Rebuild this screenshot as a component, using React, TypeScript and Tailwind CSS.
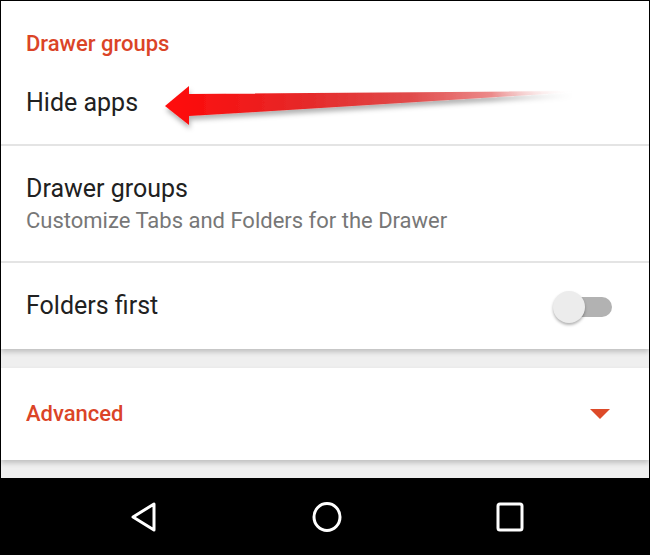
import React from "react";

const font = { fontFamily: "Roboto, 'Noto Sans', sans-serif" };

function Toggle() {
  return (
    <div className="relative w-[62px] h-[34px]">
      <div className="absolute left-[14px] top-[7px] w-[45px] h-[20px] rounded-full bg-[#b2b2b2]" />
      <div className="absolute left-0 top-[1px] w-[32px] h-[32px] rounded-full bg-[#ececec] shadow-[0_2px_3px_rgba(0,0,0,0.3)]" />
    </div>
  );
}

function Arrow() {
  return (
    <svg
      className="absolute left-[160px] top-[80px] z-20"
      width="420"
      height="56"
      viewBox="0 0 420 56"
    >
      <defs>
        <linearGradient id="ag" x1="0" y1="0" x2="1" y2="0">
          <stop offset="0" stopColor="#ff0808" />
          <stop offset="0.35" stopColor="#e52a2a" />
          <stop offset="0.6" stopColor="#e04a4a" />
          <stop offset="0.8" stopColor="#ec8a8a" />
          <stop offset="1" stopColor="#ffffff" stopOpacity="0" />
        </linearGradient>
        <filter id="sh" x="-5%" y="-40%" width="110%" height="200%">
          <feDropShadow dx="1" dy="4" stdDeviation="2.5" floodColor="#000" floodOpacity="0.3" />
        </filter>
      </defs>
      <polygon
        points="4,25 28,5 28,13 412,10 412,11.5 28,35 28,44"
        fill="url(#ag)"
        filter="url(#sh)"
        strokeLinejoin="round"
      />
    </svg>
  );
}

export default function App() {
  return (
    <div
      className="relative w-[650px] h-[555px] bg-[#efefef] border-t border-x border-black flex flex-col overflow-hidden"
      style={font}
    >
      <div className="bg-white shadow-[0_3px_5px_rgba(0,0,0,0.2)] relative z-10">
        <div className="pt-[29px] pb-[26px] px-[25px]">
          <div className="text-[22px] leading-[28px] font-medium text-[#db4427]">Drawer groups</div>
          <div className="mt-[30px] text-[25px] leading-[30px] text-[#212121]">Hide apps</div>
        </div>
        <div className="h-[2px] bg-[#e4e4e4]" />
        <div className="pt-[28px] pb-[27px] px-[25px]">
          <div className="text-[25px] leading-[30px] text-[#212121]">Drawer groups</div>
          <div className="mt-[4px] text-[22px] leading-[26px] text-[#777777]">
            Customize Tabs and Folders for the Drawer
          </div>
        </div>
        <div className="h-[2px] bg-[#e4e4e4]" />
        <div className="h-[86px] px-[25px] flex items-center justify-between">
          <div className="text-[25px] leading-[30px] text-[#212121]">Folders first</div>
          <div className="mr-[9px] mt-[2px]">
            <Toggle />
          </div>
        </div>
      </div>
      <div className="mt-[19px] h-[92px] bg-white shadow-[0_3px_5px_rgba(0,0,0,0.2)] px-[25px] flex items-center justify-between">
        <div className="text-[22px] leading-[28px] font-medium text-[#db4427]">Advanced</div>
        <svg width="22" height="12" viewBox="0 0 22 12" className="mr-[13px]">
          <polygon points="1,1 21,1 11,11" fill="#dd4a29" />
        </svg>
      </div>
      <div className="mt-[18px] h-[77px] bg-black flex items-center pl-[128px] gap-[153px]">
        <svg width="30" height="32" viewBox="0 0 30 32">
          <path
            d="M25 3 L25 29 L4 16 Z"
            fill="none"
            stroke="#fff"
            strokeWidth="3"
            strokeLinejoin="round"
          />
        </svg>
        <svg width="30" height="32" viewBox="0 0 30 32">
          <ellipse cx="15" cy="16" rx="13" ry="13.5" fill="none" stroke="#fff" strokeWidth="3" />
        </svg>
        <svg width="30" height="32" viewBox="0 0 30 32">
          <rect x="3" y="3" width="24" height="26" rx="2" fill="none" stroke="#fff" strokeWidth="3" />
        </svg>
      </div>
      <Arrow />
    </div>
  );
}
